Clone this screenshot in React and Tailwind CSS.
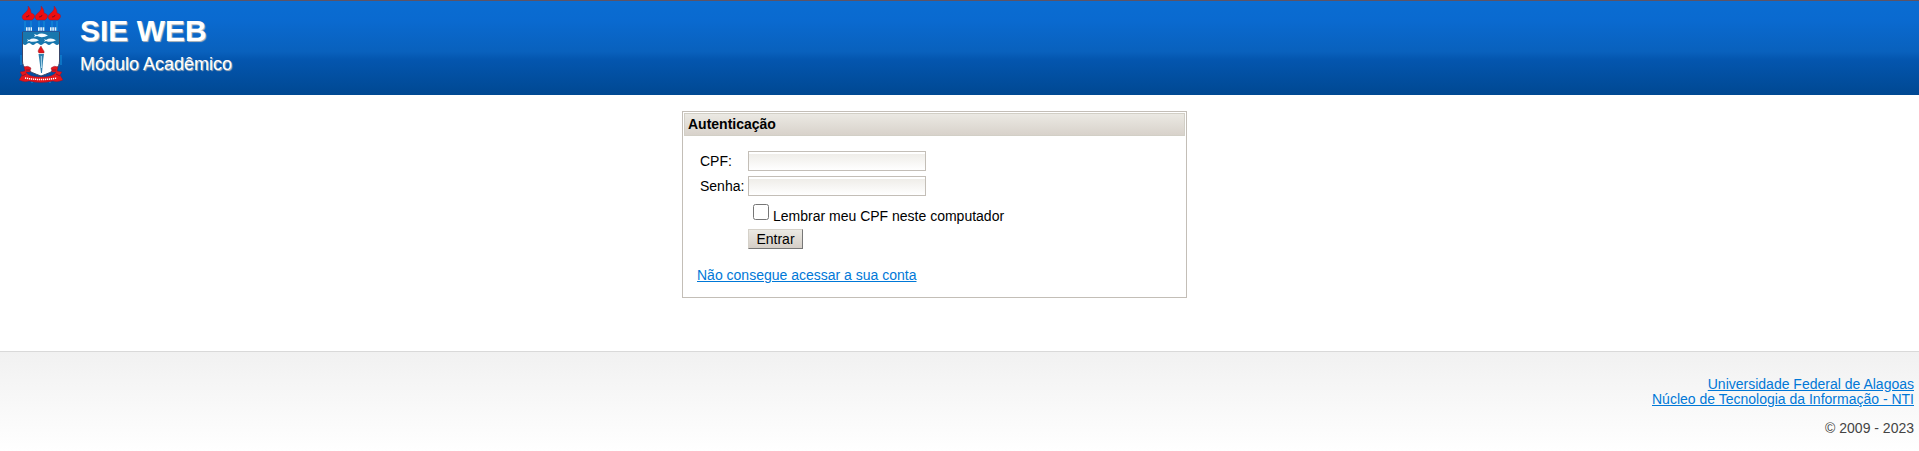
import React from "react";

function Crest() {
  return (
    <svg viewBox="0 0 44 78" className="h-[78px] w-11 shrink-0" role="img" aria-label="UFAL">
      <g stroke="#1593dc" strokeWidth="2" opacity="0.5">
        <path d="M6 16v10M12 16v10M20 16v10M25 16v10M33 16v10M38 16v10M2 50v10M42 50v10M13 76v2M31 76v2" />
      </g>
      <g fill="#ee0d10" stroke="#a01526" strokeWidth="0.4">
        <path d="M5 15C2 13 3 10 6 8C8 6 10 4 9 1C11 3 12 5 12 8C16 9 17 12 13 15Z" />
        <path d="M18 15C15 13 16 10 19 8C21 6 23 4 22 1C24 3 25 5 25 8C29 9 30 12 26 15Z" />
        <path d="M31 15C28 13 29 10 32 8C34 6 36 4 35 1C37 3 38 5 38 8C42 9 43 12 39 15Z" />
      </g>
      <path d="M7 12q3 0 3-2M20 12q3 0 3-2M33 12q3 0 3-2" fill="none" stroke="#7d0f20" strokeWidth="1" />
      <path d="M7 24h6M19 24h7M31 24h7" stroke="#e6f1f8" strokeWidth="3.500" strokeDasharray="1.600 .7" />
      <path d="M3.500 27H40.500V56C40.500 63 36 66 22 71C8 66 3.500 63 3.500 56Z" fill="#fff" stroke="#3a4668" strokeWidth="1" />
      <path d="M4 27H40V39Q38 41 36 39Q34 37 32 39Q30 41 28 39Q26 37 24 39Q22 41 20 39Q18 37 16 39Q14 41 12 39Q10 37 8 39Q6 41 4 39Z" fill="#1877ae" />
      <g fill="#f5fbff">
        <path d="M15 29l3 1q5-3 11 0.500q-6 3-11 .5l-3 1 1-1.500z" />
        <path d="M8 34l2 1q5-3 10 .3q-5 2.700-10 .7l-2 1 1-1.500z" />
        <path d="M25 34l2 1q5-3 10 .3q-5 2.700-10 .7l-2 1 1-1.500z" />
      </g>
      <path d="M20 48C18 46 20 44 22 41C23 44 26 46 25 48Z" fill="#e51519" stroke="#7b2030" strokeWidth=".4" />
      <path d="M19.500 49H25L24 56L23 68H22L20.500 56Z" fill="#2d80ae" />
      <path d="M22.300 51L22.500 63" stroke="#a9d7ec" />
      <path
        d="M5 62Q9 60 12 63L11 67L7 67Q9 72 22 72Q35 72 37 67L33 67L32 63Q35 60 39 62L38 66L43 67L41 70L44 75Q38 78 34 76Q22 79 10 76Q6 78 0 75L3 70L1 67L6 66Z"
        fill="#e5161b"
        stroke="#7c1737"
        strokeWidth=".4"
      />
      <path d="M7 65l4 0M33 65h4M7 69L3 71M37 69l4 2" stroke="#8f1430" strokeWidth="1" />
      <path d="M6 73Q22 76 38 73" fill="none" stroke="#fff" strokeWidth="1.500" strokeDasharray="1.200 .8" />
    </svg>
  );
}

const inputClass =
  "block h-5 w-[178px] border border-[#c3beb7] bg-linear-to-b from-[#edebe6] to-white px-1 text-sm shadow-[inset_0_2px_0_#ffffff] outline-none";
const linkClass = "text-[#0078d7] underline";

export default function App() {
  return (
    <div className="bg-white font-['Liberation_Sans',Arial,sans-serif] text-sm/[15px] text-black">
      <header className="flex items-start border-t border-[#5d5365] bg-[linear-gradient(to_bottom,#0a6dd2_0%,#0a6ad0_20%,#0961bd_54%,#0456af_62%,#004892_100%)] px-[19px] pt-1 pb-3 text-white">
        <Crest />
        <div className="pl-[17px] [text-shadow:1px_1px_1px_#bbbbbb]">
          <h1 className="pt-2 text-3xl/[36px] font-bold">SIE WEB</h1>
          <p className="pt-1 text-lg/[22px]">Módulo Acadêmico</p>
        </div>
      </header>

      <main className="flex justify-center pt-4 pr-[50px] pb-[53px]">
        <section className="w-[505px] border border-[#c3beb7] p-px">
          <h2 className="border border-[#d2cfc6] bg-linear-to-b from-[#ebe9e3] to-[#d8d2cb] px-[3px] py-[3px] font-bold">
            Autenticação
          </h2>
          <form className="px-3 pt-[15px] pb-[13px]" onSubmit={(e) => e.preventDefault()}>
            <div className="grid grid-cols-[44px_1fr] items-center gap-x-1 gap-y-[5px] pl-1">
              <label htmlFor="cpf">CPF:</label>
              <input id="cpf" type="text" className={inputClass} />
              <label htmlFor="senha">Senha:</label>
              <input id="senha" type="password" className={inputClass} />
            </div>
            <div className="flex items-start gap-1 pt-2 pl-[57px]">
              <input id="lembrar" type="checkbox" className="size-4" />
              <label htmlFor="lembrar" className="pt-[5px]">Lembrar meu CPF neste computador</label>
            </div>
            <div className="pt-[5px] pl-[52px]">
              <button
                type="submit"
                className="block h-5 w-[55px] border border-t-[#d5d1c9] border-r-[#777777] border-b-[#777777] border-l-[#d5d1c9] bg-linear-to-b from-[#ebe9e3] to-[#d5cec7] leading-4"
              >
                Entrar
              </button>
            </div>
            <p className="pt-[19px] pl-px">
              <a href="#conta" className={linkClass}>Não consegue acessar a sua conta</a>
            </p>
          </form>
        </section>
      </main>

      <footer className="border-t border-[#d9d9d9] bg-linear-to-b from-[#f1f1f1] to-white px-[5px] pt-[25px] pb-4 text-right text-[#444444]">
        <p><a href="#ufal" className={linkClass}>Universidade Federal de Alagoas</a></p>
        <p><a href="#nti" className={linkClass}>Núcleo de Tecnologia da Informação - NTI</a></p>
        <p className="pt-[14px]">© 2009 - 2023</p>
      </footer>
    </div>
  );
}
